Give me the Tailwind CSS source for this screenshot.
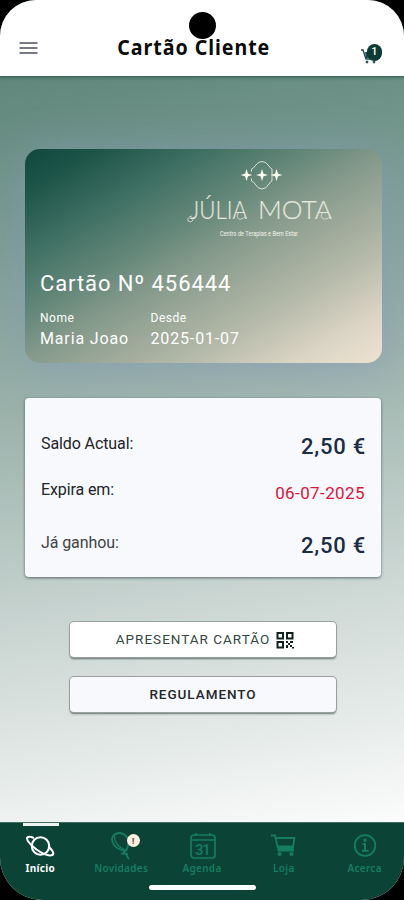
<!DOCTYPE html>
<html lang="pt">
<head>
<meta charset="utf-8">
<meta name="viewport" content="width=device-width, initial-scale=1">
<title>Cartão Cliente</title>
<script src="https://cdn.jsdelivr.net/npm/@tailwindcss/browser@4"></script>
</head>
<body class="bg-black font-['Roboto',sans-serif]">
<div class="relative w-[404px] h-[900px] overflow-hidden rounded-t-[36px] rounded-b-[42px] flex flex-col bg-[linear-gradient(170deg,#5a8075_3%,#668c81_12%,#9bb2ab_43%,#cbd6d3_66%,#e3e9e7_79%,#ffffff_94%)]">
  <header class="relative z-10 h-[77px] shrink-0 bg-white border-b border-[#416d60] shadow-[0_1px_3px_rgba(20,60,50,.4)] flex items-end justify-between pl-[19px] pr-[21px]">
    <svg class="w-[19px] h-[14px] mb-[21px]" viewBox="0 0 19 14" stroke="#747a80" stroke-width="2"><path d="M.5 2h18M.5 7h18M.5 12h18"/></svg>
    <h1 class="mb-[14px] -ml-[12px] text-[21px] leading-[29px] font-bold text-[#0c0c0c] font-['Noto_Sans',sans-serif] whitespace-nowrap w-[160px] flex justify-center"><span class="inline-block tracking-[1px] scale-x-[.935]">Cartão Cliente</span></h1>
    <div class="relative w-[22px] h-[21px] mb-[11px]">
      <svg class="absolute left-0 top-[5px] w-[17px] h-[15px]" viewBox="0 0 17 15" fill="#214854" stroke="#214854"><path d="M0 1h2l3 9H14" fill="none" stroke-width="1.4"/><path d="M4 3h11l-1.5 6H5z" stroke="none"/><circle cx="6" cy="13" r="1"/><circle cx="13" cy="13" r="1"/></svg>
      <span class="absolute left-[6px] top-0 w-[15px] h-[17px] rounded-full bg-[#0b3b33] text-white text-[11px] leading-[16px] text-center font-medium">1</span>
    </div>
    <div class="absolute left-[189px] top-[12px] w-[27px] h-[27px] rounded-full bg-black"></div>
  </header>

  <main class="flex-1 pl-[25px] pr-[22px] pt-[72px]">
    <section class="h-[214px] rounded-[15px] bg-[linear-gradient(150deg,#11483e_0%,#1d5448_10%,#3f7063_25%,#65887a_40%,#84998a_50%,#b6baaa_73%,#dbd5c5_88%,#eee2d2_100%)] shadow-[0_4px_40px_rgba(132,151,188,.6)] text-white px-[15px] pt-[10px]">
      <svg class="w-[150px] h-[80px] ml-[144px]" viewBox="0 0 150 80">
        <g fill="none" stroke="#e7ebe3" stroke-width=".9"><path d="M67.500 12.500V10Q70 9 71 7Q74 2.500 78 2.500Q82 2.500 85 7Q86 9 88 10V22Q86 23 85 25Q82 30 78 30Q74 30 71 25Q70 23 67.500 22V19.500"/></g>
        <g fill="#fffdf0"><path d="M78 10L79.500 14.700L84 16L79.500 17.300L78 22L76.500 17.300L72 16L76.500 14.700Z"/><path d="M62.500 10L64 14.700L68.500 16L64 17.300L62.500 22L61 17.300L56.500 16L61 14.700Z"/><path d="M92.500 10L94 14.700L98.500 16L94 17.300L92.500 22L91 17.300L86.500 16L91 14.700Z"/></g>
        <g font-family="Lato" font-weight="300" font-size="26" fill="#e5e7df" stroke="#e5e7df" stroke-width=".2">
          <text x="6" y="60" textLength="57" lengthAdjust="spacingAndGlyphs">JÚLIA</text>
          <text x="74" y="60" textLength="74" lengthAdjust="spacingAndGlyphs">MOTA</text>
        </g>
        <path d="M9.500 58Q9 65 4 62Q3 58 8 57M61 58Q54 63 53 57Q54 52 57 54M146 58Q139 63 137 57Q138 52 142 54" fill="none" stroke="#dfe3d9" stroke-width=".8"/>
        <text x="36" y="76.500" textLength="78" lengthAdjust="spacingAndGlyphs" font-family="Roboto" font-size="7" fill="#f3f4ed">Centro de Terapias e Bem Estar</text>
      </svg>
      <div class="mt-[30px] text-[22px] leading-[30px] tracking-[.9px] whitespace-nowrap">Cartão Nº 456444</div>
      <div class="mt-[11px] flex">
        <div class="w-[110.500px]"><div class="text-[12px] leading-[16px] tracking-[.5px]">Nome</div><div class="mt-[3px] text-[16px] leading-[20px] tracking-[.85px]">Maria Joao</div></div>
        <div><div class="text-[12px] leading-[16px] tracking-[.5px]">Desde</div><div class="mt-[3px] text-[16px] leading-[20px] tracking-[.85px]">2025-01-07</div></div>
      </div>
    </section>

    <section class="mt-[35px] h-[179px] w-[356px] rounded-[4px] bg-[#f7f9fd] shadow-[0_1px_3px_rgba(30,50,50,.65)] px-4 pt-[36px] text-[#222428]">
      <div class="flex justify-between"><span class="text-[16px] leading-[20px] tracking-[-.1px]">Saldo Actual:</span><span class="-mt-[1px] text-[22px] leading-[28px] tracking-[.75px] -mr-[1px] font-medium text-[#1b2c44]">2,50 €</span></div>
      <div class="mt-[19px] flex justify-between"><span class="text-[16px] leading-[20px] tracking-[-.1px]">Expira em:</span><span class="mt-[2px] text-[17px] leading-[22px] tracking-[.4px] text-[#dc1239]">06-07-2025</span></div>
      <div class="mt-[29px] flex justify-between text-[#404347]"><span class="text-[16px] leading-[20px] tracking-[-.1px]">Já ganhou:</span><span class="-mt-[1px] text-[22px] leading-[28px] tracking-[.75px] -mr-[1px] font-medium text-[#1b2c44]">2,50 €</span></div>
    </section>

    <div class="mt-[45px] ml-[45px] w-[266px] flex flex-col gap-[20px]">
      <button class="h-[35px] rounded-[4px] bg-white shadow-[0_0_0_1px_#98a19e,0_2px_2px_rgba(20,40,40,.6)] flex items-center justify-center gap-[6px] pl-[4px] text-[13.500px] tracking-[1px] text-[#344742] whitespace-nowrap"><span>APRESENTAR CARTÃO</span>
        <svg class="w-[18px] h-[18px]" viewBox="0 0 18 18" fill="#10221f"><path fill-rule="evenodd" d="M.500 1h7.500v7.500H.500zM2.500 3v3.500H6V3zM10 1h7.500v7.500H10zM12 3v3.500h3.500V3zM.500 10H8v7.500H.500zM2.500 12v3.500H6V12z"/><path d="M10 10h2v2h-2zM12 12h2v2h-2zM14 10h3v2h-3zM14 14h2v2h-2zM10 14h2v3h-2zM16 16h2v1.500h-2z"/></svg></button>
      <button class="h-[35px] rounded-[4px] bg-[#f7f9fd] shadow-[0_0_0_1px_#98a19e,0_2px_2px_rgba(20,40,40,.6)] text-[13.500px] tracking-[.95px] font-medium text-[#25272a]">REGULAMENTO</button>
    </div>
  </main>

  <nav class="relative h-[78px] shrink-0 bg-[#0c4337] border-t border-[#426d61] grid grid-cols-5 text-[#157d60] font-['Noto_Sans',sans-serif] text-[10px] leading-[14px] font-semibold tracking-[.3px]">
    <a class="relative flex flex-col items-center pt-[9px] text-white font-bold"><i class="absolute top-0 left-[23px] w-[36px] h-[3px] bg-[#eef3f1]"></i>
      <svg class="w-[30px] h-[29px]" viewBox="0 0 30 29" fill="none" stroke="currentColor" stroke-width="2.100"><circle cx="15.500" cy="14" r="8.700"/><path d="M9 6Q3 3.500 2 6Q1.500 9.500 11.500 17.500Q22 25 27.500 23Q30 21 24.500 15.500"/></svg><span>Início</span></a>
    <a class="relative flex flex-col items-center pt-[9px]">
      <svg class="w-[30px] h-[29px]" viewBox="0 0 30 29" fill="none" stroke="currentColor" stroke-width="1.800"><path d="M20.500 18Q13 19 8 13Q4 6 8 3Q13-1 19 3Q25 8 20.500 18ZM20 18.500L16.500 21.500L21 22Q20 24 23 27"/><path d="M8.500 4Q8 13 18 17.500" stroke-width="1.300"/></svg><span>Novidades</span>
      <b class="absolute left-[46px] top-[11px] w-[13px] h-[13px] rounded-full bg-[#fff0df] text-[#775d50] text-[8px] leading-[13px] text-center">!</b></a>
    <a class="flex flex-col items-center pt-[9px]">
      <svg class="w-[30px] h-[29px] ml-[2px]" viewBox="0 0 30 29" fill="none" stroke="currentColor" stroke-width="1.700"><rect x="3" y="3" width="24" height="23" rx="3"/><path d="M3 8h24M8 1v3M22 1v3"/><text x="7" y="22.500" textLength="16" font-family="Roboto" font-size="15" font-weight="500" fill="currentColor" stroke="none">31</text></svg><span>Agenda</span></a>
    <a class="flex flex-col items-center pt-[9px] pl-[2px]">
      <svg class="w-[30px] h-[29px]" viewBox="0 0 30 29" fill="none" stroke="currentColor" stroke-width="1.800"><path d="M2 3.500h4l3.500 15H25M7 6H25.500l-1.500 9.500H9.500"/><path d="M9 13.500h15.500v4.500H10z" fill="currentColor" stroke="none"/><circle cx="10.500" cy="22" r="1.200"/><circle cx="22.500" cy="22" r="1.200"/></svg><span>Loja</span></a>
    <a class="flex flex-col items-center pt-[9px] pl-[2px]">
      <svg class="w-[30px] h-[29px]" viewBox="0 0 30 29" fill="none" stroke="currentColor" stroke-width="1.800"><circle cx="15" cy="13.500" r="10.300"/><path d="M12.500 12H15v6.500M12 18.800h6.500" stroke-width="2"/><circle cx="15" cy="8.300" r=".8" fill="currentColor"/></svg><span>Acerca</span></a>
    <div class="absolute left-[149px] top-[62px] w-[107px] h-[5px] rounded-full bg-white"></div>
  </nav>
</div>
</body>
</html>
